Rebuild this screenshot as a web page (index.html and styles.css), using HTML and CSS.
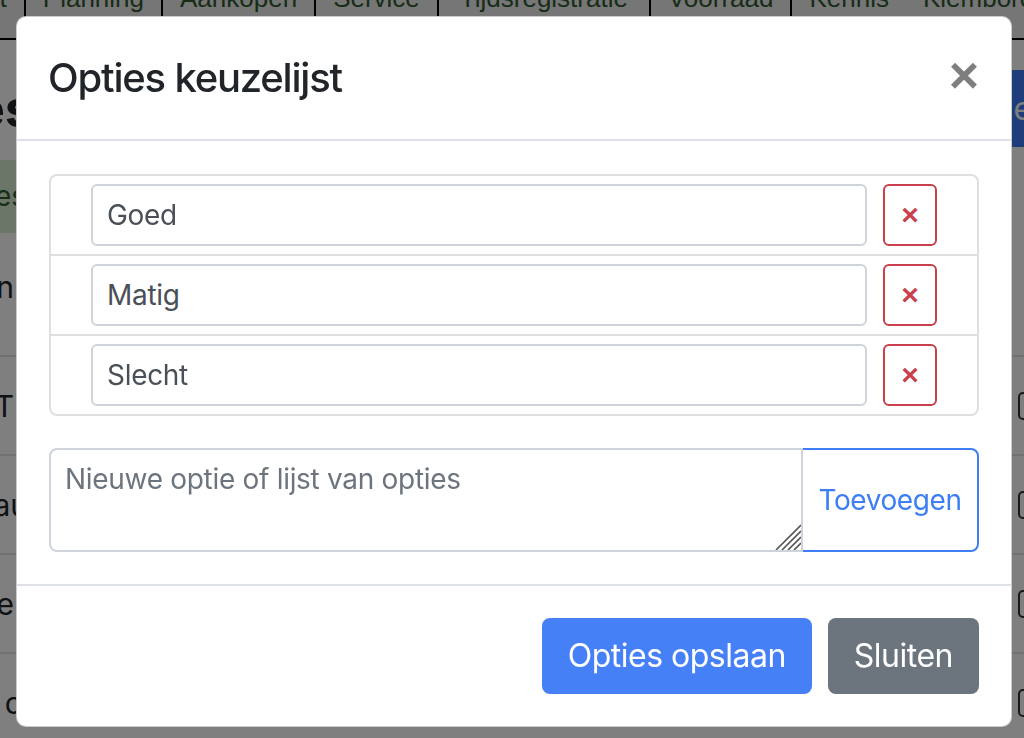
FILE: index.html
```html
<!DOCTYPE html>
<html lang="nl">
<head>
    <meta charset="UTF-8">
    <meta name="viewport" content="width=device-width, initial-scale=1.0">
    <title>Opties keuzelijst</title>
    <link rel="stylesheet" href="styles.css">
</head>
<body>
    <div class="page">
        <nav class="tabs">
            <a href="#">Overzicht</a>
            <a href="#">Planning</a>
            <a href="#">Aankopen</a>
            <a href="#">Service</a>
            <a href="#" class="wide">Tijdsregistratie</a>
            <a href="#">Voorraad</a>
            <a href="#" class="last">Kennis</a>
            <a href="#" class="last">Klembord</a>
        </nav>

        <main class="sheet">
            <div class="sheet-head">
                <h1 class="lead">Opties</h1>
                <button class="btn-new">Nieuwe vraag</button>
            </div>
            <div class="notice"><span class="lead">Vragen met opties</span></div>
            <div class="rows">
                <div class="row first"><span class="lead">Werkzaamheden</span></div>
                <div class="row"><span class="lead">Categorie T</span><span class="check"></span></div>
                <div class="row"><span class="lead wider">Niveau</span><span class="check"></span></div>
                <div class="row"><span class="lead">Datum controle</span><span class="check"></span></div>
                <div class="row"><span class="lead long">Bevestiging van c</span><span class="check"></span></div>
            </div>
        </main>
    </div>

    <div class="backdrop"></div>

    <div class="modal">
        <div class="dialog">
            <div class="modal-header">
                <h5 class="modal-title">Opties keuzelijst</h5>
                <button class="close" type="button">&times;</button>
            </div>

            <div class="modal-body">
                <ul class="options">
                    <li class="option">
                        <input type="text" value="Goed">
                        <button class="remove" type="button">&times;</button>
                    </li>
                    <li class="option">
                        <input type="text" value="Matig">
                        <button class="remove" type="button">&times;</button>
                    </li>
                    <li class="option">
                        <input type="text" value="Slecht">
                        <button class="remove" type="button">&times;</button>
                    </li>
                </ul>

                <div class="add">
                    <div class="field">
                        <textarea rows="2" placeholder="Nieuwe optie of lijst van opties"></textarea>
                        <!-- resize grip -->
                        <svg class="grip" width="26" height="26" viewBox="0 0 26 26">
                            <path d="M1 26L26 1M7 26L26 7M13 26L26 13M19 26L26 19" stroke="#555" stroke-width="1.6"/>
                        </svg>
                    </div>
                    <button class="add-btn" type="button">Toevoegen</button>
                </div>
            </div>

            <div class="modal-footer">
                <button class="btn btn-primary" type="button">Opties opslaan</button>
                <button class="btn btn-secondary" type="button">Sluiten</button>
            </div>
        </div>
    </div>
</body>
</html>
```

FILE: styles.css
```css
* {
    box-sizing: border-box;
}
body {
    margin: 0;
    height: 738px;
    overflow: hidden;
    font-family: Inter, "Liberation Sans", sans-serif;
    color: #212529;
    background: #fff;
}

/* page behind the dialog */
.tabs {
    display: flex;
    height: 40px;
    margin-left: -120px;
    background: #ececec;
    border-bottom: 2px solid #000;
    overflow: hidden;
}
.tabs a {
    display: block;
    height: 60px;
    margin-top: -16px;
    padding: 0 17px;
    font-family: "Liberation Sans", Arial, sans-serif;
    font-size: 26px;
    line-height: 28px;
    color: #2f5a2f;
    text-decoration: none;
    white-space: nowrap;
    border-right: 2px solid #000;
}
.tabs a.wide {
    padding: 0 21px;
}
.tabs a.last {
    border-right: none;
}
.sheet {
    margin-left: -330px;
}
.lead {
    display: inline-block;
    width: 364px;
    text-align: right;
    white-space: nowrap;
}
.sheet-head {
    display: flex;
    justify-content: space-between;
    align-items: center;
    padding: 30px 0 13px;
}
.sheet-head h1 {
    margin: 0;
    font-size: 52px;
    font-weight: 700;
}
.btn-new {
    margin-right: -190px;
    padding: 19px 24px;
    font-family: inherit;
    font-size: 32px;
    color: #fff;
    background: #3d7bf5;
    border: none;
    border-radius: 8px;
}
.notice {
    width: 900px;
    height: 73px;
    font-size: 28px;
    line-height: 73px;
    color: #2e5e2e;
    background: #d7ecd3;
}
.notice .lead {
    width: 356px;
}
.rows {
    font-size: 30px;
}
.row {
    display: flex;
    align-items: center;
    justify-content: space-between;
    height: 99px;
    border-bottom: 2px solid #dee2e6;
}
.row.first {
    height: 124px;
    padding-bottom: 14px;
}
.row .lead {
    width: 344px;
}
.row .lead.wider {
    width: 358px;
}
.row .lead.long {
    width: 352px;
}
.check {
    width: 28px;
    height: 28px;
    margin-right: -22px;
    border: 2px solid #333;
    border-radius: 5px;
    background: #fff;
}

/* dialog */
.backdrop {
    position: fixed;
    inset: 0;
    background: rgba(0, 0, 0, 0.5);
}
.modal {
    position: fixed;
    inset: 0;
    padding: 16px 0 0 16px;
}
.dialog {
    width: 996px;
    background: #fff;
    border: 1px solid rgba(0, 0, 0, 0.2);
    border-radius: 10px;
    overflow: hidden;
}
.modal-header {
    display: flex;
    align-items: flex-start;
    padding: 31px 32px 31px 31px;
    border-bottom: 2px solid #dee2e6;
}
.modal-title {
    margin: 0;
    font-size: 40px;
    font-weight: 500;
    line-height: 60px;
    letter-spacing: -1.2px;
}
.close {
    margin: -32px -32px -32px auto;
    padding: 33px 32px 31px;
    font-family: "Liberation Sans", Arial, sans-serif;
    font-size: 52px;
    font-weight: 700;
    line-height: 1;
    color: #000;
    opacity: 0.5;
    background: none;
    border: none;
}
.modal-body {
    padding: 33px 32px 32px;
}
.options {
    margin: 0;
    padding: 0;
    list-style: none;
    border: 2px solid #dfdfdf;
    border-radius: 8px;
}
.option {
    display: flex;
    gap: 16px;
    padding: 8px 40px;
}
.option + .option {
    border-top: 2px solid #dfdfdf;
}
.option input {
    flex: 1;
    height: 62px;
    padding: 8px 14px;
    font-family: inherit;
    font-size: 28px;
    letter-spacing: -0.3px;
    color: #495057;
    border: 2px solid #ced4da;
    border-radius: 6px;
}
.remove {
    width: 54px;
    height: 62px;
    font-family: "Liberation Sans", Arial, sans-serif;
    font-size: 30px;
    font-weight: 700;
    color: #c9404c;
    background: #fff;
    border: 2px solid #c9404c;
    border-radius: 6px;
}
.add {
    display: flex;
    margin-top: 32px;
}
.field {
    position: relative;
    display: flex;
    flex: 1;
}
.field textarea {
    flex: 1;
    height: 104px;
    padding: 8px 14px;
    font-family: inherit;
    font-size: 28px;
    line-height: 42px;
    letter-spacing: -0.3px;
    color: #495057;
    border: 2px solid #ced4da;
    border-radius: 8px 0 0 8px;
    resize: none;
}
.field textarea::placeholder {
    color: #6c757d;
}
.grip {
    position: absolute;
    right: 2px;
    bottom: 2px;
}
.add-btn {
    width: 178px;
    margin-left: -2px;
    font-family: inherit;
    font-size: 28px;
    letter-spacing: -0.4px;
    color: #3d7ef5;
    background: #fff;
    border: 2px solid #3d7ef5;
    border-radius: 0 8px 8px 0;
}
.modal-footer {
    display: flex;
    justify-content: flex-end;
    gap: 16px;
    padding: 32px;
    border-top: 2px solid #dee2e6;
}
.btn {
    padding: 12px 24px;
    font-family: inherit;
    font-size: 32px;
    line-height: 48px;
    letter-spacing: -0.5px;
    color: #fff;
    border: 2px solid transparent;
    border-radius: 8px;
}
.btn-primary {
    background: #4680f7;
}
.btn-secondary {
    background: #6c757d;
}
```
